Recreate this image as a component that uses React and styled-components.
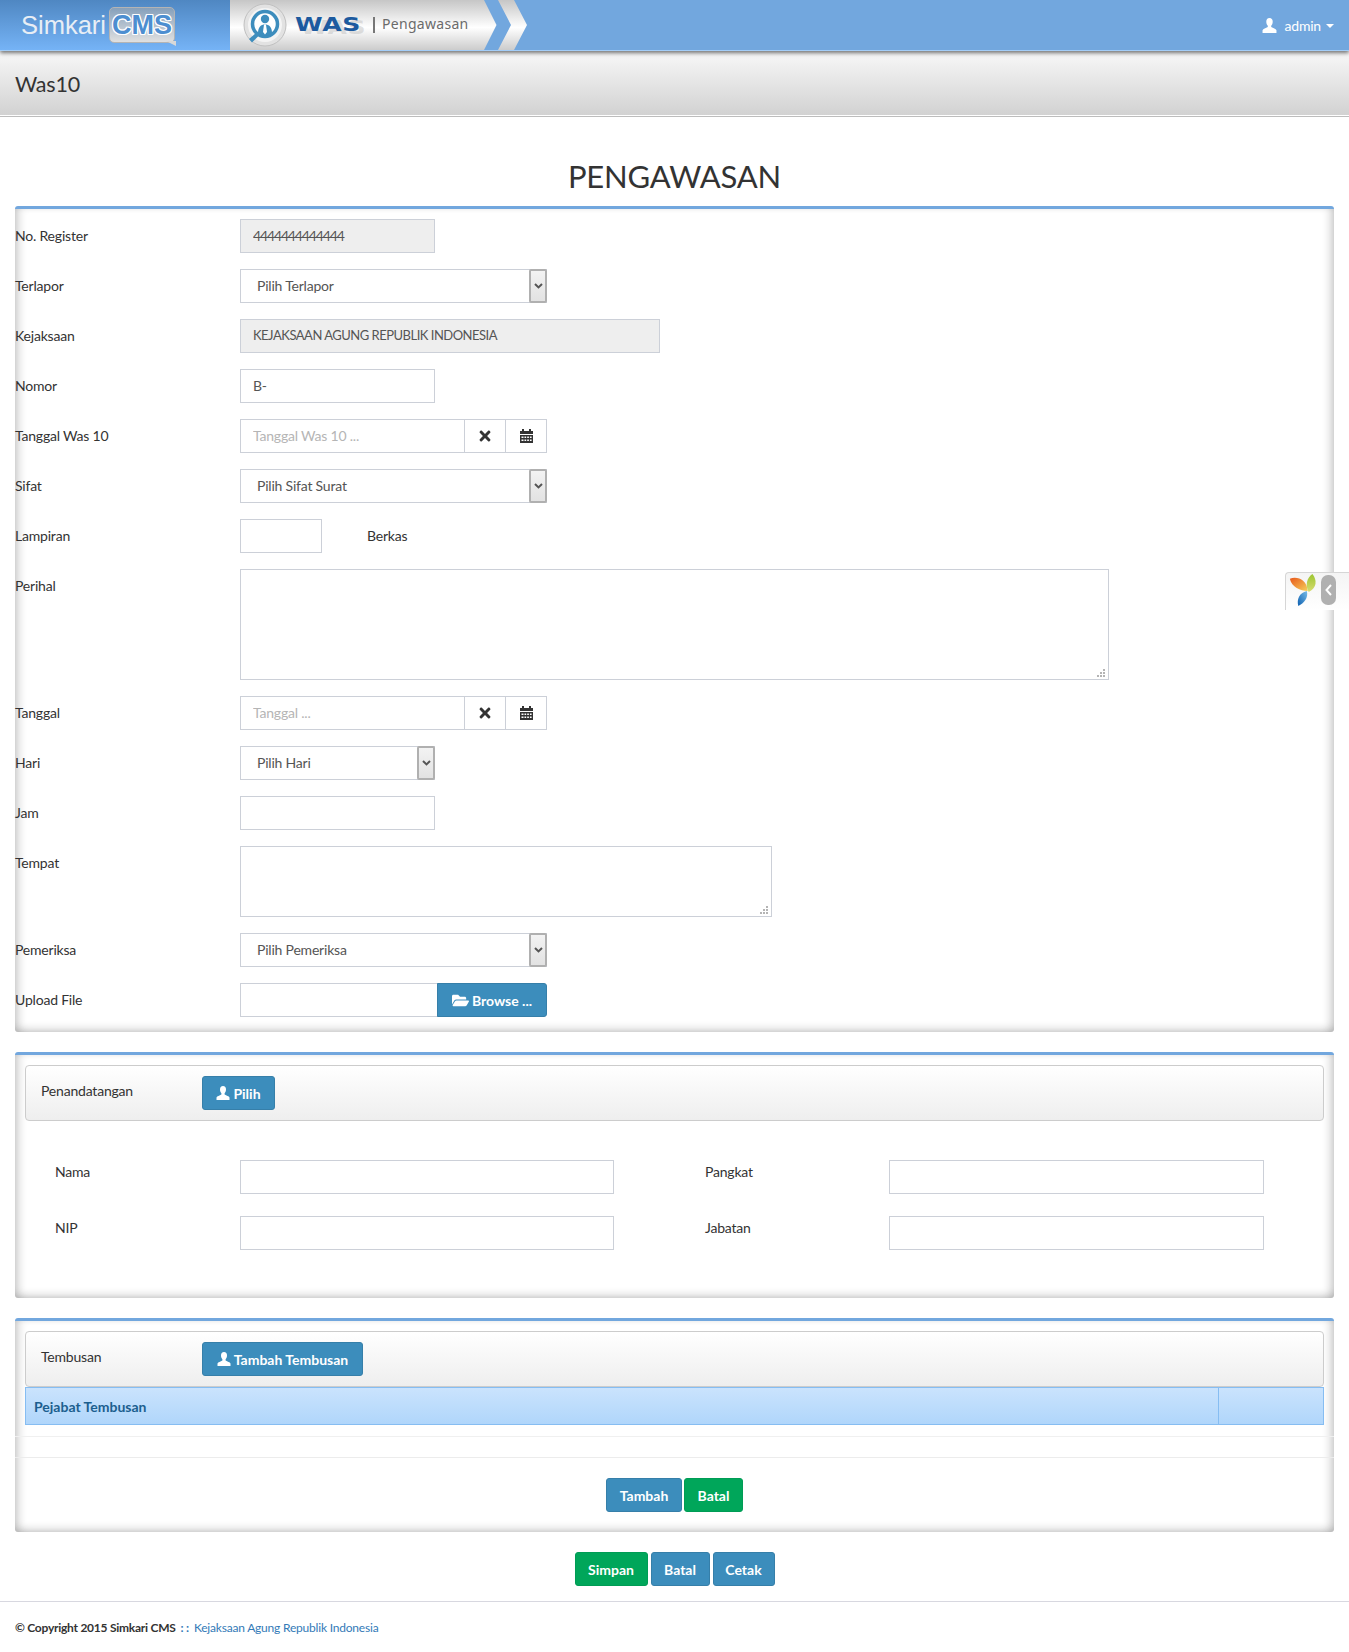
import React from "react";
import styled, { createGlobalStyle } from "styled-components";
import { FaTimes, FaFolderOpen } from "react-icons/fa";

const GlobalStyle = createGlobalStyle`
  * { box-sizing: border-box; }
  body {
    margin: 0;
    background: #fff;
    font-family: "Lato", "Noto Sans", sans-serif;
    font-size: 14px;
    letter-spacing: -0.2px;
    color: #333;
  }
`;

const Page = styled.div`
  position: relative;
  width: 1349px;
  height: 1652px;
  overflow: hidden;
`;

const TopBar = styled.header`
  position: relative;
  z-index: 2;
  display: flex;
  height: 51px;
  background: #72a7de;
  border-bottom: 1px solid #a3cdf7;
  box-shadow: 0 2px 4px rgba(0, 0, 0, 0.55);
`;

const Brand = styled.div`
  display: flex;
  align-items: center;
  width: 230px;
  padding: 0 0 0 21px;
  background: linear-gradient(to bottom, #4f87c2, #75b3f6);
`;

const BrandName = styled.span`
  font-family: "Liberation Sans", Arial, sans-serif;
  font-size: 25.5px;
  letter-spacing: 0;
  color: #e8eef5;
`;

const BrandBubble = styled.span`
  position: relative;
  display: flex;
  align-items: center;
  justify-content: center;
  width: 66px;
  height: 36px;
  margin-left: 3px;
  padding-top: 1px;
  border: 1px solid #b4b4b4;
  border-radius: 5px;
  background: linear-gradient(to bottom, #86a0bb, #e0e0e0);
  font-family: "Liberation Sans", Arial, sans-serif;
  font-size: 27px;
  font-weight: 700;
  letter-spacing: 0;
  color: #4d8ed0;
  text-shadow: 1px 0 0 #fff, -1px 0 0 #fff, 0 1px 0 #fff, 0 -1px 0 #fff,
    1px 1px 0 #fff, -1px -1px 0 #fff, 1px -1px 0 #fff, -1px 1px 0 #fff;

  &::after {
    content: "";
    position: absolute;
    right: -2px;
    bottom: -4px;
    border-left: 10px solid transparent;
    border-top: 5px solid #d8d8d8;
  }
`;

const Banner = styled.div`
  display: flex;
  align-items: center;
  width: 254px;
  padding-left: 13px;
  background: linear-gradient(to bottom, #c6c6c6, #ffffff 55%, #cccccc);
`;

const BannerLogo = styled.svg`
  flex: none;
  width: 44px;
  height: 44px;
`;

const WasMark = styled.span`
  display: block;
  flex: none;
  width: 66px;
  margin: 0 0 2px 8px;
  font-family: "DejaVu Sans", sans-serif;
  font-size: 19px;
  font-weight: 700;
  letter-spacing: 0.5px;
  transform: scaleX(1.32);
  transform-origin: left center;
  color: #1c5a9f;
  text-shadow: 4px 3px 0 rgba(170, 170, 170, 0.35);
`;

const BannerDivider = styled.span`
  width: 2px;
  height: 16px;
  margin-left: 12px;
  background: #777;
`;

const BannerText = styled.span`
  margin: 0 0 3px 7px;
  font-family: "Noto Sans", sans-serif;
  font-size: 14px;
  letter-spacing: 0.3px;
  color: #6b6b6b;
`;

const Chevrons = styled.svg`
  flex: none;
  width: 44px;
  height: 50px;
`;

const UserMenu = styled.div`
  display: flex;
  align-items: center;
  gap: 8px;
  margin-left: auto;
  padding-right: 15px;
  color: #fff;
  font-size: 14px;
`;

const Caret = styled.span`
  width: 0;
  height: 0;
  margin-left: -3px;
  margin-top: 2px;
  border-left: 4px solid transparent;
  border-right: 4px solid transparent;
  border-top: 4px solid #fff;
`;

const SubHeader = styled.div`
  display: flex;
  align-items: center;
  height: 65px;
  padding: 2px 15px 0;
  background: linear-gradient(to bottom, #f8f8f8, #d2d2d2);
  border-bottom: 1px solid #fff;
  box-shadow: 0 1px 0 #bdbdbd;
`;

const SubTitle = styled.h2`
  margin: 0;
  font-size: 21.5px;
  font-weight: 400;
  color: #333;
`;

const Main = styled.main`
  padding: 0 15px;
`;

const PageTitle = styled.h1`
  margin: 38px 0 0;
  height: 52px;
  line-height: 44px;
  text-align: center;
  font-size: 31px;
  font-weight: 400;
  color: #333;
`;

const Box = styled.section`
  padding-top: ${(p) => p.$top || 0}px;
  padding-bottom: ${(p) => p.$bottom || 0}px;
  margin-bottom: 20px;
  border-top: 3px solid #72a7de;
  border-radius: 3px;
  box-shadow: inset 0 -6px 9px -3px rgba(0, 0, 0, 0.17),
    inset 8px 0 9px -4px rgba(0, 0, 0, 0.17),
    inset -8px 0 9px -4px rgba(0, 0, 0, 0.17);
`;

const Row = styled.div`
  display: flex;
  margin-bottom: 16px;

  &:last-child {
    margin-bottom: 0;
  }
`;

const Label = styled.label`
  flex: none;
  width: 225px;
  line-height: 33px;
  color: #333;
`;

const TextField = styled.input`
  display: block;
  flex: none;
  width: ${(p) => p.$w || 195}px;
  height: 34px;
  padding: 0 12px 2px;
  border: 1px solid #ccd0d8;
  border-radius: 0;
  outline: none;
  background: ${(p) => (p.readOnly ? "#eeeeee" : "#fff")};
  font: inherit;
  font-size: ${(p) => p.$size || 14}px;
  letter-spacing: ${(p) => p.$spacing ?? -0.2}px;
  color: #555;

  &::placeholder {
    color: #b5b5b5;
    opacity: 1;
  }
`;

const dot = "linear-gradient(#b4b4b4, #b4b4b4)";

const TextArea = styled.textarea`
  display: block;
  flex: none;
  width: ${(p) => p.$w}px;
  height: ${(p) => p.$h}px;
  border: 1px solid #ccd0d8;
  border-radius: 0;
  outline: none;
  resize: none;
  background-image: ${dot}, ${dot}, ${dot}, ${dot}, ${dot}, ${dot};
  background-size: 2px 2px;
  background-repeat: no-repeat;
  background-position: right 3px bottom 2px, right 6px bottom 2px,
    right 9px bottom 2px, right 3px bottom 5px, right 6px bottom 5px,
    right 3px bottom 8px;
`;

const SelectBox = styled.div`
  display: flex;
  align-items: center;
  flex: none;
  width: ${(p) => p.$w || 307}px;
  height: 34px;
  padding: 0 0 2px 16px;
  border: 1px solid #ccd0d8;
  color: #555;
`;

const SelectArrow = styled.span`
  display: flex;
  align-items: center;
  justify-content: center;
  width: 18px;
  height: 34px;
  margin: 0 -1px -2px auto;
  border: 2px solid #b0b0b0;
  border-radius: 2px;
  background: linear-gradient(to bottom, #f3f3f3, #e2e2e2);
`;

const DateGroup = styled.div`
  display: flex;
  flex: none;
  width: 307px;
`;

const AddOn = styled.span`
  display: flex;
  align-items: center;
  justify-content: center;
  width: ${(p) => p.$w}px;
  height: 34px;
  margin-left: -1px;
  border: 1px solid #ccd0d8;
  color: #333;
`;

const BerkasText = styled.span`
  margin-left: 45px;
  line-height: 33px;
  color: #333;
`;

const Button = styled.button`
  display: inline-flex;
  align-items: center;
  justify-content: center;
  gap: 3px;
  width: ${(p) => p.$w}px;
  height: 34px;
  padding: 0;
  border: 1px solid ${(p) => (p.$green ? "#009c55" : "#367fa9")};
  border-radius: 3px;
  background: ${(p) => (p.$green ? "#00a65a" : "#3c8dbc")};
  font: inherit;
  font-weight: 700;
  letter-spacing: 0;
  color: #fff;
`;

const BrowseButton = styled(Button)`
  margin-left: -1px;
  border-radius: 0 3px 3px 0;
`;

const Panel = styled.div`
  display: flex;
  align-items: center;
  height: 56px;
  margin: 0 10px;
  padding-left: 15px;
  border: 1px solid #cccccc;
  border-radius: 4px;
  background: linear-gradient(to bottom, #ffffff, #eeeeee);
`;

const PanelLabel = styled.span`
  width: 161px;
  margin-top: -5px;
  color: #333;
`;

const SignGrid = styled.div`
  display: grid;
  grid-template-columns: 185px 374px 91px 184px 375px;
  row-gap: 22px;
  margin: 39px 0 0 40px;
`;

const SignLabel = styled.span`
  line-height: 24px;
  color: #333;
`;

const SignGap = styled.span``;

const SignField = styled(TextField)`
  width: 100%;
`;

const TableHead = styled.div`
  display: grid;
  grid-template-columns: 1fr 105px;
  height: 38px;
  margin: 0 10px;
  border: 1px solid #86bdf2;
  background: linear-gradient(to bottom, #cae3fd, #b0d6fb);
`;

const HeadCell = styled.div`
  display: flex;
  align-items: center;
  padding-left: 8px;
  font-weight: 700;
  letter-spacing: 0;
  color: #1c5f8f;

  & + & {
    border-left: 1px solid #86bdf2;
  }
`;

const EmptyRow = styled.div`
  height: 22px;
  margin-top: 11px;
  border-top: 1px solid #f0f0f0;
  border-bottom: 1px solid #ececec;
`;

const ButtonRow = styled.div`
  display: flex;
  justify-content: center;
  gap: ${(p) => p.$gap || 2}px;
  margin-top: ${(p) => p.$top || 0}px;
`;

const Footer = styled.footer`
  margin-top: 15px;
  padding: 18px 15px 0;
  border-top: 1px solid #d8d8e0;
  font-size: 12px;
  color: #333;
`;

const Strong = styled.strong`
  font-weight: 700;
  letter-spacing: -0.25px;
`;

const FooterDots = styled.span`
  margin: 0 2px;
  font-weight: 700;
  color: #337ab7;
`;

const FooterLink = styled.a`
  color: #337ab7;
  text-decoration: none;
`;

const DebugTab = styled.div`
  position: absolute;
  top: 572px;
  right: 0;
  display: flex;
  align-items: center;
  gap: 3px;
  width: 64px;
  height: 38px;
  padding: 0 0 4px 3px;
  border: 1px solid #d6d6d6;
  border-right: 0;
  border-bottom: 0;
  border-radius: 4px 0 0 0;
  background: linear-gradient(to bottom, #f4f4f4, #ffffff);
`;

const DebugToggle = styled.span`
  display: flex;
  align-items: center;
  justify-content: center;
  width: 15px;
  height: 30px;
  border-radius: 7px;
  background: #b0b0b0;
`;

function UserIcon({ size = 14, color = "#fff" }) {
  return (
    <svg width={size} height={size} viewBox="0 0 14 14" fill={color}>
      <path d="M7 0C5 0 4 1.400 4 3.400c0 1.700.7 3 1.400 3.800v1.200C3.600 9.500 1 10 .5 11.400V14h13v-2.600c-.5-1.400-3.100-1.900-4.900-3V7.200C9.300 6.400 10 5.100 10 3.400 10 1.400 9 0 7 0z" />
    </svg>
  );
}

function CalendarIcon() {
  return (
    <svg width="13" height="14" viewBox="0 0 13 14" fill="#333">
      <rect x="2" y="0" width="2" height="3" />
      <rect x="9" y="0" width="2" height="3" />
      <path d="M0 2h13v3H0z" />
      <path d="M0 6h13v8H0zM1.500 7.500v1.400h2V7.500zm3 0v1.400h1.700V7.500zm2.700 0v1.400h1.700V7.500zm2.700 0v1.400h1.700V7.500zm-8.400 3v1.400h2v-1.400zm3 0v1.400h1.700v-1.400zm2.700 0v1.400h1.700v-1.400zm2.700 0v1.400h1.700v-1.400z" fillRule="evenodd" />
    </svg>
  );
}

function SelectField({ width, children }) {
  return (
    <SelectBox $w={width}>
      {children}
      <SelectArrow>
        <svg width="9" height="6" viewBox="0 0 9 6" fill="none" stroke="#555" strokeWidth="2">
          <path d="M1 1l3.500 3.400L8 1" />
        </svg>
      </SelectArrow>
    </SelectBox>
  );
}

function DateField({ placeholder }) {
  return (
    <DateGroup>
      <TextField $w={225} placeholder={placeholder} />
      <AddOn $w={42}>
        <FaTimes size={16} />
      </AddOn>
      <AddOn $w={42}>
        <CalendarIcon />
      </AddOn>
    </DateGroup>
  );
}

function WasLogo() {
  return (
    <BannerLogo viewBox="0 0 44 44">
      <circle cx="22" cy="22" r="21" fill="#e2e2e2" stroke="#c0c0c0" />
      <circle cx="22" cy="22" r="17" fill="#f4f4f4" />
      <circle cx="22" cy="21" r="12.500" fill="#fff" stroke="#3d8dbd" strokeWidth="3.500" />
      <circle cx="22" cy="16" r="4.200" fill="#3d8dbd" />
      <path d="M15 30c0-6 3-8.500 7-8.500s7 2.500 7 8.500c-2 2-4.500 3-7 3s-5-1-7-3z" fill="#3d8dbd" />
      <path d="M21 21.500h2l1 7.500-2 2.500-2-2.500z" fill="#fff" />
      <path d="M14 29l-8 7 3 3.500 7.500-7.500z" fill="#3d8dbd" />
    </BannerLogo>
  );
}

function YiiLogo() {
  return (
    <svg width="29" height="32" viewBox="0 0 29 34">
      <defs>
        <linearGradient id="yiiOrange" x1="0" y1="0" x2="1" y2="1">
          <stop offset="0" stopColor="#e8581c" />
          <stop offset="1" stopColor="#f6d05a" />
        </linearGradient>
        <linearGradient id="yiiGreen" x1="0" y1="0" x2="0" y2="1">
          <stop offset="0" stopColor="#9cc531" />
          <stop offset="1" stopColor="#d8dc70" />
        </linearGradient>
        <linearGradient id="yiiBlue" x1="0" y1="1" x2="1" y2="0">
          <stop offset="0" stopColor="#0d5fb0" />
          <stop offset="1" stopColor="#79bde8" />
        </linearGradient>
      </defs>
      <path d="M0 5c8-3 18 1 19 13C11 18 2 14 0 5z" fill="url(#yiiOrange)" />
      <path d="M24 0c5 6 5 15-4 19-4-7-2-15 4-19z" fill="url(#yiiGreen)" />
      <path d="M18 18c2 7-3 13-9 16-2-7 1-14 9-16z" fill="url(#yiiBlue)" />
    </svg>
  );
}

const signFields = [
  ["Nama", "Pangkat"],
  ["NIP", "Jabatan"],
];

export default function App() {
  return (
    <Page>
      <GlobalStyle />
      <TopBar>
        <Brand>
          <BrandName>Simkari</BrandName>
          <BrandBubble>CMS</BrandBubble>
        </Brand>
        <Banner>
          <WasLogo />
          <WasMark>WAS</WasMark>
          <BannerDivider />
          <BannerText>Pengawasan</BannerText>
        </Banner>
        <Chevrons viewBox="0 0 44 50">
          <defs>
            <linearGradient id="bannerFill" x1="0" y1="0" x2="0" y2="1">
              <stop offset="0" stopColor="#c6c6c6" />
              <stop offset="0.55" stopColor="#ffffff" />
              <stop offset="1" stopColor="#cccccc" />
            </linearGradient>
          </defs>
          <path d="M0 0L12.500 25 0 50z" fill="url(#bannerFill)" />
          <path d="M14 0l13 25-13 25h16l13-25L30 0z" fill="url(#bannerFill)" />
        </Chevrons>
        <UserMenu>
          <UserIcon size={15} />
          admin
          <Caret />
        </UserMenu>
      </TopBar>

      <SubHeader>
        <SubTitle>Was10</SubTitle>
      </SubHeader>

      <Main>
        <PageTitle>PENGAWASAN</PageTitle>

        <Box $top={10} $bottom={15}>
          <Row>
            <Label>No. Register</Label>
            <TextField readOnly $spacing={-1.15} defaultValue="4444444444444" />
          </Row>
          <Row>
            <Label>Terlapor</Label>
            <SelectField>Pilih Terlapor</SelectField>
          </Row>
          <Row>
            <Label>Kejaksaan</Label>
            <TextField $w={420} readOnly $size={13} $spacing={-0.5} defaultValue="KEJAKSAAN AGUNG REPUBLIK INDONESIA" />
          </Row>
          <Row>
            <Label>Nomor</Label>
            <TextField defaultValue="B-" />
          </Row>
          <Row>
            <Label>Tanggal Was 10</Label>
            <DateField placeholder="Tanggal Was 10 ..." />
          </Row>
          <Row>
            <Label>Sifat</Label>
            <SelectField>Pilih Sifat Surat</SelectField>
          </Row>
          <Row>
            <Label>Lampiran</Label>
            <TextField $w={82} />
            <BerkasText>Berkas</BerkasText>
          </Row>
          <Row>
            <Label>Perihal</Label>
            <TextArea $w={869} $h={111} />
          </Row>
          <Row>
            <Label>Tanggal</Label>
            <DateField placeholder="Tanggal ..." />
          </Row>
          <Row>
            <Label>Hari</Label>
            <SelectField width={195}>Pilih Hari</SelectField>
          </Row>
          <Row>
            <Label>Jam</Label>
            <TextField />
          </Row>
          <Row>
            <Label>Tempat</Label>
            <TextArea $w={532} $h={71} />
          </Row>
          <Row>
            <Label>Pemeriksa</Label>
            <SelectField>Pilih Pemeriksa</SelectField>
          </Row>
          <Row>
            <Label>Upload File</Label>
            <TextField $w={198} />
            <BrowseButton $w={110}>
              <FaFolderOpen size={17} />
              Browse ...
            </BrowseButton>
          </Row>
        </Box>

        <Box $top={10} $bottom={48}>
          <Panel>
            <PanelLabel>Penandatangan</PanelLabel>
            <Button $w={73}>
              <UserIcon />
              Pilih
            </Button>
          </Panel>
          <SignGrid>
            {signFields.map(([left, right]) => (
              <React.Fragment key={left}>
                <SignLabel>{left}</SignLabel>
                <SignField />
                <SignGap />
                <SignLabel>{right}</SignLabel>
                <SignField />
              </React.Fragment>
            ))}
          </SignGrid>
        </Box>

        <Box $top={10} $bottom={20}>
          <Panel>
            <PanelLabel>Tembusan</PanelLabel>
            <Button $w={161}>
              <UserIcon />
              Tambah Tembusan
            </Button>
          </Panel>
          <TableHead>
            <HeadCell>Pejabat Tembusan</HeadCell>
            <HeadCell />
          </TableHead>
          <EmptyRow />
          <ButtonRow $top={20}>
            <Button $w={76}>Tambah</Button>
            <Button $w={59} $green>Batal</Button>
          </ButtonRow>
        </Box>

        <ButtonRow $gap={3}>
          <Button $w={73} $green>Simpan</Button>
          <Button $w={59}>Batal</Button>
          <Button $w={62}>Cetak</Button>
        </ButtonRow>
      </Main>

      <Footer>
        <Strong>© Copyright 2015 Simkari CMS</Strong>
        {" "}
        <FooterDots>: :</FooterDots>
        {" "}
        <FooterLink>Kejaksaan Agung Republik Indonesia</FooterLink>
      </Footer>

      <DebugTab>
        <YiiLogo />
        <DebugToggle>
          <svg width="7" height="12" viewBox="0 0 7 12" fill="none" stroke="#fff" strokeWidth="2">
            <path d="M6 1L1.500 6 6 11" />
          </svg>
        </DebugToggle>
      </DebugTab>
    </Page>
  );
}
